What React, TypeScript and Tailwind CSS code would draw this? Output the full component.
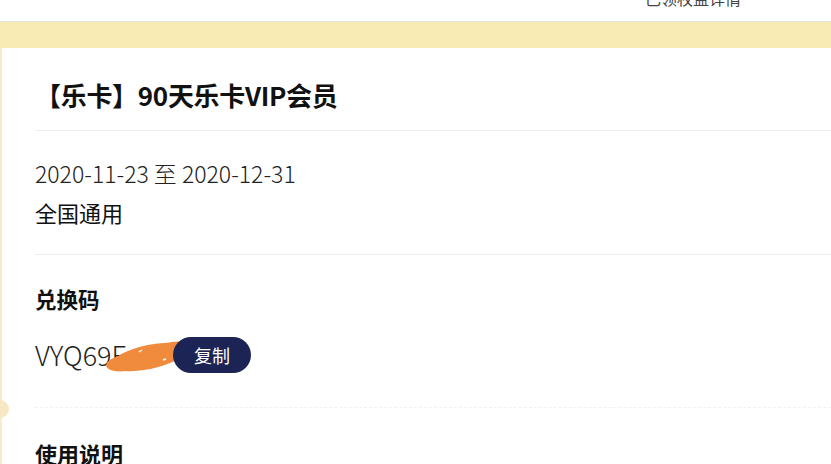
import React from "react";

export default function App() {
  const font = { fontFamily: '"Noto Sans CJK SC", "Noto Sans", sans-serif' };
  return (
    <div className="w-[831px] h-[464px] overflow-hidden bg-white relative" style={font}>
      {/* top header */}
      <div className="h-[21px] bg-white relative border-b border-[#e6e6e6] box-content">
        <span className="absolute left-[645px] top-[-14px] text-[16px] leading-[24px] text-[#444]">已领权益详情</span>
      </div>
      {/* yellow band */}
      <div className="h-[26px] bg-[#f9ebb4]" />
      {/* card */}
      <div className="flex">
        <div className="w-[2px] bg-[#f7ecc6]" />
        <div className="flex-1 bg-white pl-[33px] relative">
          <div className="h-[83px] flex items-center pt-[10px] border-b border-[#ececec]">
            <h1 className="text-[26px] font-bold text-[#111] tracking-[-0.3px]">【乐卡】90天乐卡VIP会员</h1>
          </div>
          <div className="h-[124px] border-b border-[#ececec] pt-[25px]">
            <div className="text-[23px] font-light text-[#222] leading-[34px]">2020-11-23 至 2020-12-31</div>
            <div className="text-[22px] text-[#111] leading-[34px] mt-[5px]">全国通用</div>
          </div>
          <div className="h-[153px] border-b border-dashed border-[#f1f1f1] pt-[29px]">
            <div className="text-[21.5px] font-bold text-[#111] leading-[30px]">兑换码</div>
            <div className="flex items-center mt-[23px] relative">
              <span className="w-[138px] text-[27px] font-light text-[#222] leading-[36px]">VYQ69F</span>
              <svg className="absolute left-[70px] top-[4px]" width="86" height="32" viewBox="0 0 86 32">
                <g fill="#f08a3c">
                  <ellipse cx="44" cy="16" rx="38" ry="12" transform="rotate(-12 44 16)" />
                  <ellipse cx="20" cy="22" rx="19" ry="8" transform="rotate(-8 20 22)" />
                  <ellipse cx="68" cy="9" rx="17" ry="8" transform="rotate(-10 68 9)" />
                </g>
                <path d="M34 11 l3 -2" stroke="#fff" strokeWidth="1.5" />
                <path d="M58 19 l3 -1" stroke="#fff" strokeWidth="1.5" />
                <path d="M74 7 l2 -1" stroke="#fff" strokeWidth="1.5" />
              </svg>
              <button className="relative h-[36px] w-[78px] rounded-full bg-[#1c2456] text-white text-[18px] flex items-center justify-center">
                复制
              </button>
            </div>
          </div>
          <div className="pt-[30px]">
            <div className="text-[22px] font-bold text-[#111] leading-[30px]">使用说明</div>
          </div>
        </div>
      </div>
      {/* notch */}
      <div className="absolute left-[-9px] top-[400px] w-[18px] h-[18px] rounded-full bg-[#f5e8c2]" />
    </div>
  );
}
